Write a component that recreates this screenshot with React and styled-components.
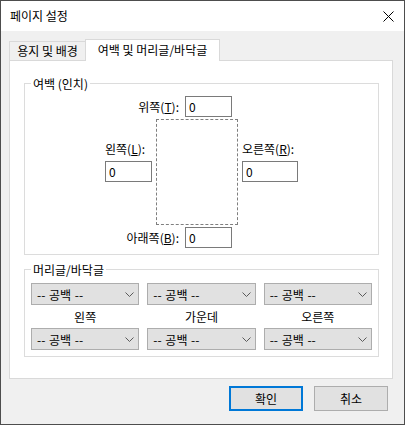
import React from "react";
import styled, { createGlobalStyle } from "styled-components";

const GlobalStyle = createGlobalStyle`
  html, body {
    margin: 0;
    padding: 0;
    background: #ffffff;
  }
  body {
    font-family: "Noto Sans CJK KR", "Noto Sans", sans-serif;
    font-size: 12px;
    color: #000;
  }
  * {
    box-sizing: border-box;
  }
`;

const Window = styled.div`
  width: 405px;
  height: 425px;
  border: 1px solid #4d4d4d;
  background: #f0f0f0;
  display: flex;
  flex-direction: column;
`;

const TitleBar = styled.div`
  height: 30px;
  flex-shrink: 0;
  background: #ffffff;
  display: flex;
  align-items: center;
  justify-content: space-between;
  padding: 0 10px 0 9px;
  line-height: 16px;
`;

const CloseIcon = styled.svg`
  display: block;
`;

const Body = styled.div`
  flex: 1;
  display: flex;
  flex-direction: column;
  padding: 8px 11px 0 8px;
`;

const TabStrip = styled.div`
  display: flex;
  align-items: flex-end;
  height: 21px;
`;

const Tab = styled.div`
  position: relative;
  text-align: center;
  white-space: nowrap;
  border: 1px solid #d9d9d9;
  border-bottom: none;
  width: ${(p) => (p.$active ? "135px" : "77px")};
  height: ${(p) => (p.$active ? "22px" : "19px")};
  line-height: ${(p) => (p.$active ? "19px" : "18px")};
  background: ${(p) => (p.$active ? "#ffffff" : "#f0f0f0")};
  margin-left: ${(p) => (p.$active ? "-1px" : "0")};
  margin-bottom: ${(p) => (p.$active ? "-1px" : "0")};
  z-index: ${(p) => (p.$active ? 1 : 0)};
`;

const Panel = styled.div`
  width: 384px;
  height: 319px;
  border: 1px solid #d9d9d9;
  background: #ffffff;
  padding: 14px 13px 0 14px;
  display: flex;
  flex-direction: column;
  gap: 6px;
`;

const Group = styled.fieldset`
  margin: 0;
  min-width: 0;
  border: 1px solid #dcdcdc;
  padding: ${(p) => p.$pad};
`;

const Legend = styled.legend`
  margin-left: 6px;
  padding: 0 2px;
  line-height: 17px;
  font-size: 12px;
`;

const MarginLayout = styled.div`
  padding-left: 80px;
  display: flex;
  flex-direction: column;
  gap: 2px;
`;

const EdgeRow = styled.div`
  width: 127px;
  display: flex;
  align-items: center;
  justify-content: flex-end;
  gap: 6px;
`;

const MiddleRow = styled.div`
  display: flex;
  gap: 4px;
`;

const SideColumn = styled.div`
  width: ${(p) => p.$width}px;
  padding-top: 22px;
  display: flex;
  flex-direction: column;
  gap: 4px;
`;

const FieldLabel = styled.label`
  line-height: 16px;
  white-space: nowrap;
`;

const Key = styled.u`
  text-underline-offset: 1px;
`;

const NumberBox = styled.input`
  width: ${(p) => p.$width}px;
  height: 21px;
  border: 1px solid #7a7a7a;
  background: #ffffff;
  padding: 0 3px;
  margin: 0;
  font: inherit;
  font-size: 12px;
  color: #000;
  outline: none;
`;

const PagePreview = styled.div`
  width: 82px;
  height: 106px;
  border: 1px dashed #7f7f7f;
`;

const SelectGrid = styled.div`
  display: grid;
  grid-template-columns: repeat(3, 1fr);
  grid-template-rows: 22px 23px 22px;
  column-gap: 8px;
  padding: 0 6px;
`;

const Dropdown = styled.div`
  height: 22px;
  border: 1px solid #adadad;
  background: #e1e1e1;
  display: flex;
  align-items: center;
  justify-content: space-between;
  padding: 0 4px 0 5px;
  white-space: nowrap;
  word-spacing: 1px;
`;

const ColumnLabel = styled.div`
  text-align: center;
  line-height: 23px;
`;

const ButtonRow = styled.div`
  display: flex;
  justify-content: flex-end;
  gap: 11px;
  margin-top: 7px;
  padding-right: 5px;
`;

const DialogButton = styled.button`
  width: 74px;
  height: 25px;
  margin: 0;
  padding: 0;
  font: inherit;
  font-size: 12px;
  color: #000;
  background: #e1e1e1;
  border: ${(p) => (p.$default ? "2px solid #0078d7" : "1px solid #adadad")};
`;

const Chevron = () => (
  <svg width="9" height="5" viewBox="0 0 9 5">
    <polyline points="0.5,0.5 4.5,4.5 8.5,0.5" fill="none" stroke="#5a5a5a" strokeWidth="1" />
  </svg>
);

const Select = ({ value }) => (
  <Dropdown>
    <span>{value}</span>
    <Chevron />
  </Dropdown>
);

const blanks = ["-- 공백 --", "-- 공백 --", "-- 공백 --"];

export default function App() {
  return (
    <>
      <GlobalStyle />
      <Window>
        <TitleBar>
          <span>페이지 설정</span>
          <CloseIcon width="11" height="11" viewBox="0 0 11 11">
            <path d="M0.5 0.5 L10.5 10.5 M10.5 0.5 L0.5 10.5" stroke="#000" strokeWidth="1" />
          </CloseIcon>
        </TitleBar>
        <Body>
          <TabStrip>
            <Tab>용지 및 배경</Tab>
            <Tab $active>여백 및 머리글/바닥글</Tab>
          </TabStrip>
          <Panel>
            <Group $pad="4px 0 6px 0">
              <Legend>여백 (인치)</Legend>
              <MarginLayout>
                <EdgeRow>
                  <FieldLabel>
                    위쪽(<Key>T</Key>):
                  </FieldLabel>
                  <NumberBox $width={47} defaultValue="0" readOnly />
                </EdgeRow>
                <MiddleRow>
                  <SideColumn $width={47}>
                    <FieldLabel>
                      왼쪽(<Key>L</Key>):
                    </FieldLabel>
                    <NumberBox $width={47} defaultValue="0" readOnly />
                  </SideColumn>
                  <PagePreview />
                  <SideColumn $width={56}>
                    <FieldLabel>
                      오른쪽(<Key>R</Key>):
                    </FieldLabel>
                    <NumberBox $width={56} defaultValue="0" readOnly />
                  </SideColumn>
                </MiddleRow>
                <EdgeRow>
                  <FieldLabel>
                    아래쪽(<Key>B</Key>):
                  </FieldLabel>
                  <NumberBox $width={47} defaultValue="0" readOnly />
                </EdgeRow>
              </MarginLayout>
            </Group>
            <Group $pad="5px 0 6px 0">
              <Legend>머리글/바닥글</Legend>
              <SelectGrid>
                {blanks.map((b, i) => (
                  <Select key={"h" + i} value={b} />
                ))}
                <ColumnLabel>왼쪽</ColumnLabel>
                <ColumnLabel>가운데</ColumnLabel>
                <ColumnLabel>오른쪽</ColumnLabel>
                {blanks.map((b, i) => (
                  <Select key={"f" + i} value={b} />
                ))}
              </SelectGrid>
            </Group>
          </Panel>
          <ButtonRow>
            <DialogButton $default>확인</DialogButton>
            <DialogButton>취소</DialogButton>
          </ButtonRow>
        </Body>
      </Window>
    </>
  );
}
